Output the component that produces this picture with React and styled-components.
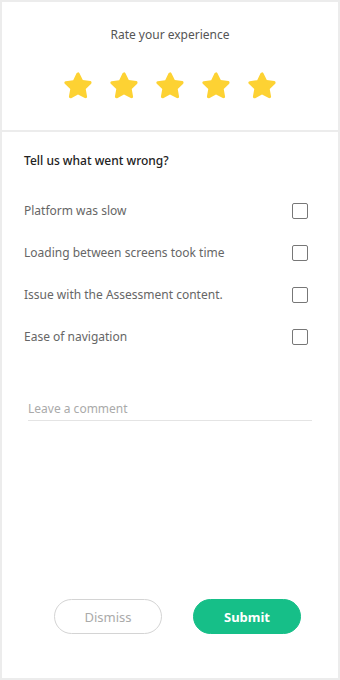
import styled, { createGlobalStyle } from "styled-components";

const GlobalStyle = createGlobalStyle`
  html, body { margin: 0; padding: 0; background: #fff; }
  body { font-family: "Noto Sans", "Open Sans", sans-serif; }
  * { box-sizing: border-box; }
`;

const options = [
  "Platform was slow",
  "Loading between screens took time",
  "Issue with the Assessment content.",
  "Ease of navigation",
];

const Star = () => (
  <svg width="32" height="31" viewBox="0 0 24 23">
    <path
      d="M12 1.6c.5 0 .9.3 1.1.7l2.5 5.1 5.6.8c.9.1 1.3 1.3.7 1.9l-4.1 4 1 5.6c.2.9-.8 1.6-1.7 1.2L12 18.3l-5.1 2.7c-.8.4-1.8-.3-1.7-1.2l1-5.6-4.1-4c-.7-.6-.3-1.8.7-1.9l5.6-.8 2.5-5.1c.2-.4.6-.7 1.1-.7z"
      fill="#fdd233"
    />
  </svg>
);

export default function App() {
  return (
    <Page>
      <GlobalStyle />
      <Header>
        <Caption>Rate your experience</Caption>
        <Stars>
          {[0, 1, 2, 3, 4].map((i) => (
            <Star key={i} />
          ))}
        </Stars>
      </Header>
      <Body>
        <Question>Tell us what went wrong?</Question>
        <List>
          {options.map((o) => (
            <Option key={o}>
              <span>{o}</span>
              <Box type="checkbox" />
            </Option>
          ))}
        </List>
        <Comment placeholder="Leave a comment" />
      </Body>
      <Actions>
        <Button>Dismiss</Button>
        <Button primary>Submit</Button>
      </Actions>
    </Page>
  );
}

const Page = styled.div`
  width: 340px;
  height: 680px;
  border: 2px solid #ececec;
  display: flex;
  flex-direction: column;
  background: #fff;
`;

const Header = styled.div`
  display: flex;
  flex-direction: column;
  align-items: center;
  padding-top: 24px;
  height: 130px;
  border-bottom: 2px solid #ececec;
`;

const Caption = styled.div`
  font-size: 12px;
  color: #555;
  line-height: 18px;
`;

const Stars = styled.div`
  display: flex;
  gap: 14px;
  margin-top: 26px;
`;

const Body = styled.div`
  flex: 1;
  padding: 20px 30px 0 22px;
`;

const Question = styled.div`
  font-size: 12px;
  font-weight: 500;
  color: #222;
  line-height: 18px;
`;

const List = styled.div`
  margin-top: 32px;
  display: flex;
  flex-direction: column;
  gap: 24px;
`;

const Option = styled.label`
  display: flex;
  align-items: center;
  justify-content: space-between;
  font-size: 12px;
  color: #666;
  line-height: 18px;
  height: 18px;
`;

const Box = styled.input`
  appearance: none;
  width: 16px;
  height: 16px;
  margin: 0;
  border: 1.5px solid #777;
  border-radius: 2px;
  background: #fff;
`;

const Comment = styled.input`
  display: block;
  margin: 54px 0 0 4px;
  width: 284px;
  border: none;
  border-bottom: 1.5px solid #e4e4e4;
  padding: 0 0 2px;
  font-family: inherit;
  font-size: 12px;
  line-height: 18px;
  outline: none;
  &::placeholder { color: #aaa; }
`;

const Actions = styled.div`
  display: flex;
  justify-content: center;
  gap: 31px;
  padding-bottom: 44px;
  padding-left: 15px;
`;

const Button = styled.button`
  width: 108px;
  height: 35px;
  border-radius: 18px;
  font-family: inherit;
  font-size: 13px;
  font-weight: ${(p) => (p.primary ? 700 : 400)};
  color: ${(p) => (p.primary ? "#fff" : "#aaa")};
  background: ${(p) => (p.primary ? "#16bf88" : "#fff")};
  border: 1.5px solid ${(p) => (p.primary ? "#16bf88" : "#d4d4d4")};
`;
